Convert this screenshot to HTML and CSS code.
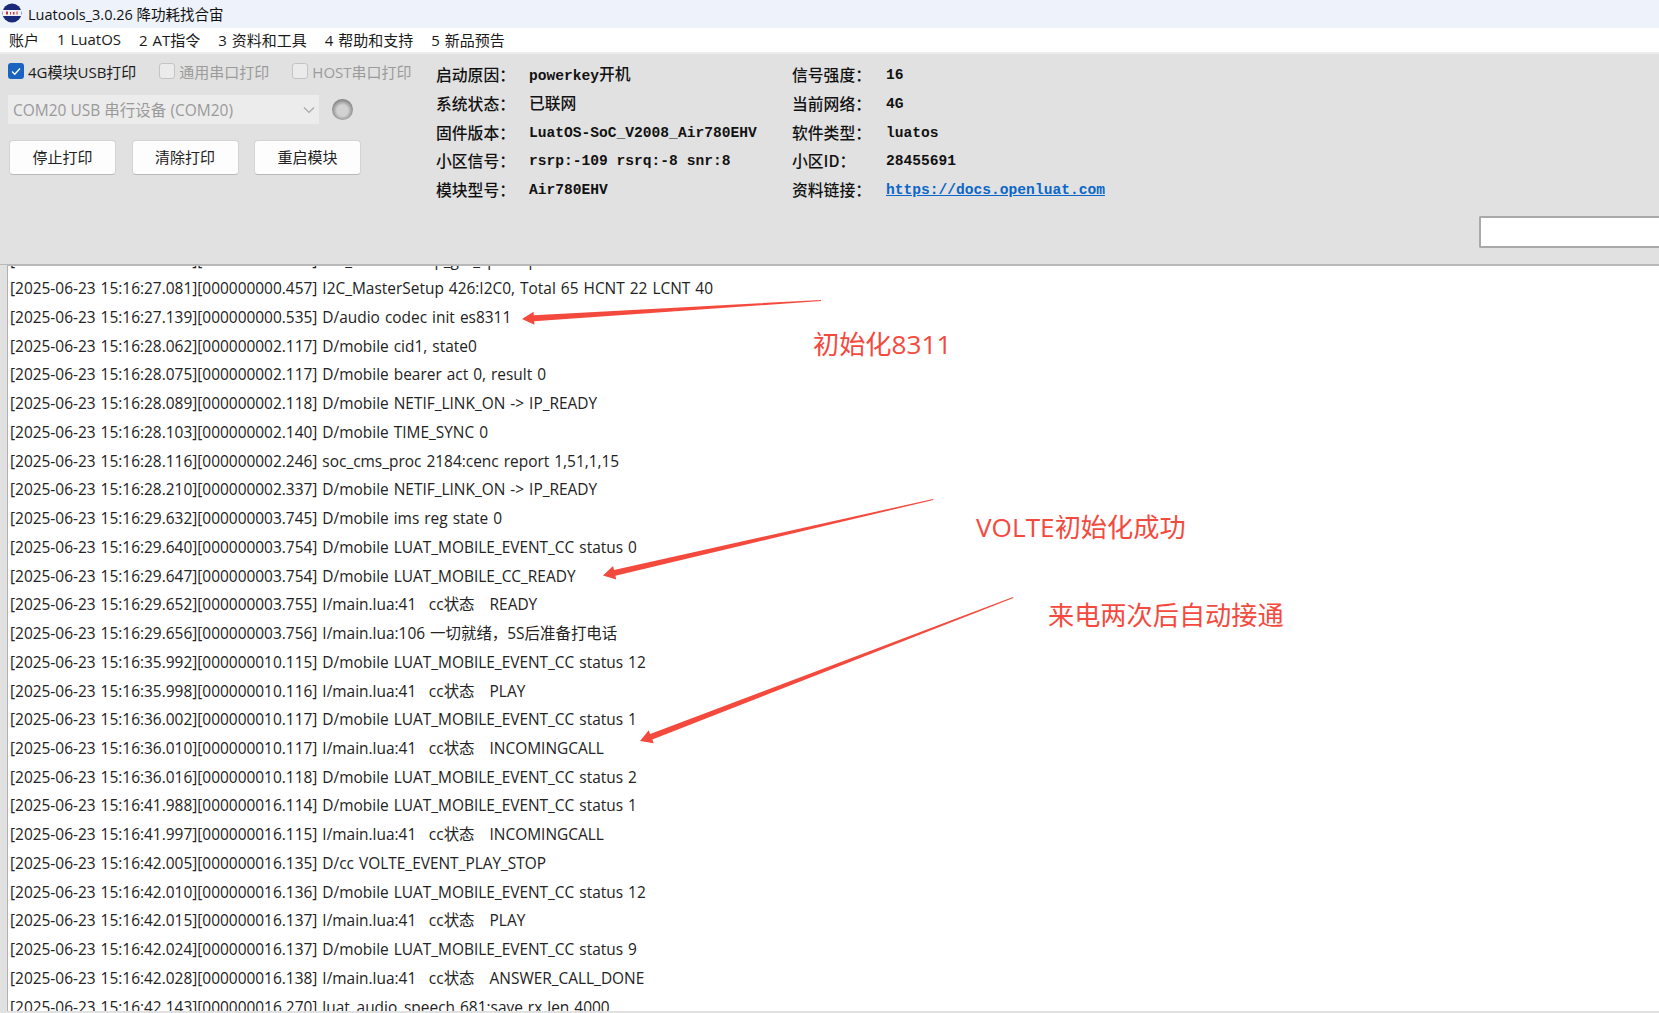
FILE: index.html
```html
<!DOCTYPE html>
<html lang="zh-CN">
<head>
<meta charset="utf-8">
<title>Luatools</title>
<link rel="stylesheet" href="styles.css">
</head>
<body>
<div class="window">
  <header class="titlebar">
    <svg class="logo" width="20" height="20" viewBox="0 0 20 20"><circle cx="10" cy="10" r="9.5" fill="#1a2a78"/><path d="M1 7h18v6H1z" fill="#f2f2f6"/><path d="M4 8.500h2v3H4zM8 9h1v2.500H8zM11 9h1.500v2.500H11zM14.500 8.500h1v3h-1z" fill="#c8323a"/></svg>
    <span>Luatools_3.0.26 降功耗找合宙</span>
  </header>
  <nav class="menu">
    <span>账户</span><span>1 LuatOS</span><span>2 AT指令</span><span>3 资料和工具</span><span>4 帮助和支持</span><span>5 新品预告</span>
  </nav>
  <section class="panel">
    <div class="controls">
      <div class="checks">
        <label class="check on"><i class="box"><svg width="16" height="16" viewBox="0 0 16 16"><path d="M4 8.500l2.800 2.700L12 5.500" fill="none" stroke="#fff" stroke-width="1.300"/></svg></i>4G模块USB打印</label>
        <label class="check off"><i class="box"></i>通用串口打印</label>
        <label class="check off"><i class="box"></i>HOST串口打印</label>
      </div>
      <div class="port">
        <div class="combo"><span>COM20 USB 串行设备 (COM20)</span><svg width="12" height="8" viewBox="0 0 12 8"><path d="M1 1.500l5 5 5-5" fill="none" stroke="#a8a8a8" stroke-width="1.200"/></svg></div>
        <i class="led"></i>
      </div>
      <div class="buttons">
        <button class="btn">停止打印</button><button class="btn">清除打印</button><button class="btn">重启模块</button>
      </div>
    </div>
    <dl class="info">
      <dt>启动原因：</dt><dd>powerkey<span class="zh">开机</span></dd><dt>信号强度：</dt><dd>16</dd>
      <dt>系统状态：</dt><dd><span class="zh">已联网</span></dd><dt>当前网络：</dt><dd>4G</dd>
      <dt>固件版本：</dt><dd>LuatOS-SoC_V2008_Air780EHV</dd><dt>软件类型：</dt><dd>luatos</dd>
      <dt>小区信号：</dt><dd>rsrp:-109 rsrq:-8 snr:8</dd><dt>小区ID：</dt><dd>28455691</dd>
      <dt>模块型号：</dt><dd>Air780EHV</dd><dt>资料链接：</dt><dd><a href="#">https://docs.openluat.com</a></dd>
    </dl>
    <input class="search" type="text" aria-label="search">
  </section>
  <main class="log">
    <div class="lines">
<p>[2025-06-23 15:16:27.075][000000000.451] I2C_MasterSetup_get_speed p</p>
<p>[2025-06-23 15:16:27.081][000000000.457] I2C_MasterSetup 426:I2C0, Total 65 HCNT 22 LCNT 40</p>
<p>[2025-06-23 15:16:27.139][000000000.535] D/audio codec init es8311</p>
<p>[2025-06-23 15:16:28.062][000000002.117] D/mobile cid1, state0</p>
<p>[2025-06-23 15:16:28.075][000000002.117] D/mobile bearer act 0, result 0</p>
<p>[2025-06-23 15:16:28.089][000000002.118] D/mobile NETIF_LINK_ON -&gt; IP_READY</p>
<p>[2025-06-23 15:16:28.103][000000002.140] D/mobile TIME_SYNC 0</p>
<p>[2025-06-23 15:16:28.116][000000002.246] soc_cms_proc 2184:cenc report 1,51,1,15</p>
<p>[2025-06-23 15:16:28.210][000000002.337] D/mobile NETIF_LINK_ON -&gt; IP_READY</p>
<p>[2025-06-23 15:16:29.632][000000003.745] D/mobile ims reg state 0</p>
<p>[2025-06-23 15:16:29.640][000000003.754] D/mobile LUAT_MOBILE_EVENT_CC status 0</p>
<p>[2025-06-23 15:16:29.647][000000003.754] D/mobile LUAT_MOBILE_CC_READY</p>
<p>[2025-06-23 15:16:29.652][000000003.755] I/main.lua:41 &thinsp; cc状态   READY</p>
<p>[2025-06-23 15:16:29.656][000000003.756] I/main.lua:106 一切就绪，5S后准备打电话</p>
<p>[2025-06-23 15:16:35.992][000000010.115] D/mobile LUAT_MOBILE_EVENT_CC status 12</p>
<p>[2025-06-23 15:16:35.998][000000010.116] I/main.lua:41 &thinsp; cc状态   PLAY</p>
<p>[2025-06-23 15:16:36.002][000000010.117] D/mobile LUAT_MOBILE_EVENT_CC status 1</p>
<p>[2025-06-23 15:16:36.010][000000010.117] I/main.lua:41 &thinsp; cc状态   INCOMINGCALL</p>
<p>[2025-06-23 15:16:36.016][000000010.118] D/mobile LUAT_MOBILE_EVENT_CC status 2</p>
<p>[2025-06-23 15:16:41.988][000000016.114] D/mobile LUAT_MOBILE_EVENT_CC status 1</p>
<p>[2025-06-23 15:16:41.997][000000016.115] I/main.lua:41 &thinsp; cc状态   INCOMINGCALL</p>
<p>[2025-06-23 15:16:42.005][000000016.135] D/cc VOLTE_EVENT_PLAY_STOP</p>
<p>[2025-06-23 15:16:42.010][000000016.136] D/mobile LUAT_MOBILE_EVENT_CC status 12</p>
<p>[2025-06-23 15:16:42.015][000000016.137] I/main.lua:41 &thinsp; cc状态   PLAY</p>
<p>[2025-06-23 15:16:42.024][000000016.137] D/mobile LUAT_MOBILE_EVENT_CC status 9</p>
<p>[2025-06-23 15:16:42.028][000000016.138] I/main.lua:41 &thinsp; cc状态   ANSWER_CALL_DONE</p>
<p>[2025-06-23 15:16:42.143][000000016.270] luat_audio_speech 681:save rx len 4000</p>
    </div>
  </main>
  <svg class="arrows" width="1659" height="1013" viewBox="0 0 1659 1013">
    <path fill="#f44a3e" d="M821 300 L821 301 L534.200 321.200 L534.400 324.700 L522 319 L533.600 311.700 L533.800 315.200 Z"/>
    <path fill="#f44a3e" d="M933 499 L933.300 500 L615.400 575.700 L616.300 579.600 L603 575.500 L613.100 566 L614 569.900 Z"/>
    <path fill="#f44a3e" d="M1013 597 L1013.400 598 L652.300 739.500 L653.700 743.200 L640 741 L648.700 730.200 L650.100 733.900 Z"/>
  </svg>
  <span class="note note-a">初始化8311</span>
  <span class="note note-b">VOLTE初始化成功</span>
  <span class="note note-c">来电两次后自动接通</span>
</div>
</body>
</html>
```
FILE: styles.css
```css
* { box-sizing: border-box; }
html, body { margin: 0; padding: 0; }
body { width: 1659px; height: 1013px; overflow: hidden; background: #e1e1e1; font-family: "Open Sans", "Noto Sans CJK SC", sans-serif; color: #1c1c1c; }
.window { position: relative; width: 1659px; height: 1013px; display: flex; flex-direction: column; overflow: hidden; }
.titlebar { height: 28px; flex: none; display: flex; align-items: center; gap: 6px; padding: 0 0 2px 2px; background: #eef3fb; font-size: 14.500px; color: #111; }
.logo { flex: none; }
.menu { height: 24px; flex: none; display: flex; align-items: center; gap: 18px; padding: 0 0 2px 9px; background: #fff; font-size: 15px; word-spacing: 1px; color: #1a1a1a; }
.panel { height: 213px; flex: none; display: flex; position: relative; background: #e1e1e1; border-top: 2px solid #ececec; border-bottom: 1px solid #b8b8b8; }
.controls { width: 436px; flex: none; padding: 6px 0 0 8px; display: flex; flex-direction: column; }
.checks { display: flex; height: 22px; align-items: center; }
.check { display: flex; align-items: center; gap: 4px; font-size: 15px; margin-right: 23px; white-space: nowrap; }
.check.off { color: #9b9b9b; }
.box { width: 16px; height: 16px; border-radius: 3px; display: block; flex: none; }
.on .box { background: #1a63c0; }
.off .box { background: #ebebeb; border: 1px solid #c4c4c4; }
.box svg { display: block; }
.port { display: flex; align-items: center; margin-top: 13px; height: 29px; }
.combo { width: 311px; height: 29px; background: #ececec; display: flex; align-items: center; justify-content: space-between; padding: 0 4px 0 5px; font-size: 15.500px; color: #9a9a9a; }
.led { width: 21px; height: 21px; border-radius: 50%; margin-left: 13px; background: radial-gradient(circle at 50% 55%, #d2d2d2 0 35%, #7b7b7b 75%, #8e8e8e 100%); }
.buttons { display: flex; gap: 15.500px; margin-top: 16px; padding-left: 1px; }
.btn { width: 107px; height: 35px; background: #fdfdfd; border: 1px solid #d3d3d3; border-bottom-color: #b9b9b9; border-radius: 4px; font: 15px "Open Sans", "Noto Sans CJK SC", sans-serif; color: #222; padding: 0 0 2px; }
.info { margin: 7px 0 0; display: grid; grid-template-columns: 93px 263px 94px 400px; grid-auto-rows: 28.700px; align-items: center; align-content: start; font-family: "Liberation Mono", "Noto Sans CJK SC", monospace; font-weight: 700; font-size: 14.600px; line-height: 18px; color: #111; }
.info dt, .info dd { margin: 0; white-space: nowrap; }
.info dt { font-size: 15.800px; font-family: "Noto Sans CJK SC", "Liberation Mono", sans-serif; font-weight: 500; }
.zh { font-family: "Noto Sans CJK SC", sans-serif; font-size: 15.800px; font-weight: 500; }
.info a { color: #0a66c8; }
.search { position: absolute; right: 0; top: 162px; width: 180px; height: 32px; background: #fff; border: 2px solid #a9a9a9; border-right: 0; border-radius: 2px 0 0 2px; padding: 0; }
.log { margin: 0 0 2px 7px; flex: 1; min-height: 0; overflow: hidden; background: #fff; border-left: 1px solid #b0b0b0; border-top: 1px solid #b8b8b8; padding-left: 2px; }
.lines { margin-top: -20.500px; }
.lines p { margin: 0; height: 28.740px; line-height: 28.740px; white-space: pre; font-size: 15.450px; word-spacing: 1px; color: #222; }
.arrows { position: absolute; left: 0; top: 0; pointer-events: none; }
.note { position: absolute; font-size: 26.200px; line-height: 34px; color: #f44a3e; white-space: nowrap; }
.note-a { left: 813px; top: 327px; }
.note-b { left: 976px; top: 510px; }
.note-c { left: 1048px; top: 598px; }
```
